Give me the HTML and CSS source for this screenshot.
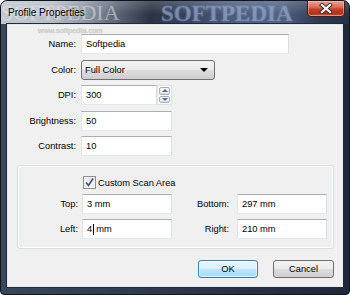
FILE: index.html
```html
<!DOCTYPE html>
<html lang="en">
<head>
    <meta charset="UTF-8">
    <title>Profile Properties</title>
    <link rel="stylesheet" href="styles.css">
</head>
<body>
    <div class="window">
        <div class="titlebar">
            <span class="watermark wm-left">SOFTPEDIA</span>
            <span class="watermark wm-right">SOFTPEDIA</span>
            <span class="title">Profile Properties</span>
            <div class="close-btn">
                <svg width="14" height="11" viewBox="0 0 14 11">
                    <path d="M3 2 L11 9 M11 2 L3 9" stroke="#3a2a28" stroke-width="4" stroke-linecap="square"/>
                    <path d="M3 2 L11 9 M11 2 L3 9" stroke="#ffffff" stroke-width="2.2" stroke-linecap="square"/>
                </svg>
            </div>
        </div>

        <div class="client">
            <span class="site-mark">www.softpedia.com</span>

            <div class="fields">
                <label class="lbl">Name:</label>
                <div class="input name-input">Softpedia</div>

                <label class="lbl">Color:</label>
                <div class="select">
                    <span>Full Color</span>
                    <span class="drop-arrow"></span>
                </div>

                <label class="lbl">DPI:</label>
                <div class="spin-wrap">
                    <div class="input dpi-input">300</div>
                    <div class="spinner">
                        <div class="spin-btn"><span class="tri-up"></span></div>
                        <div class="spin-btn"><span class="tri-down"></span></div>
                    </div>
                </div>

                <label class="lbl">Brightness:</label>
                <div class="input short-input">50</div>

                <label class="lbl">Contrast:</label>
                <div class="input short-input">10</div>
            </div>

            <div class="scan-group">
                <div class="check-row">
                    <span class="checkbox">
                        <svg width="11" height="11" viewBox="0 0 11 11">
                            <path d="M2 5.5 L4.5 8.5 L9 1.5" fill="none" stroke="#3d4f8a" stroke-width="1.6"/>
                        </svg>
                    </span>
                    <span>Custom Scan Area</span>
                </div>

                <label class="lbl">Top:</label>
                <div class="input short-input">3 mm</div>
                <label class="lbl lbl-right">Bottom:</label>
                <div class="input short-input">297 mm</div>

                <label class="lbl">Left:</label>
                <div class="input short-input">4<span class="caret"></span>mm</div>
                <label class="lbl lbl-right">Right:</label>
                <div class="input short-input">210 mm</div>
            </div>

            <div class="buttons">
                <button class="btn btn-default">OK</button>
                <button class="btn btn-cancel">Cancel</button>
            </div>
        </div>
    </div>
</body>
</html>
```

FILE: styles.css
```css
body {
    margin: 0;
    background-color: #ffffff;
    font-family: 'Liberation Sans', Arial, sans-serif;
    font-size: 9.3px;
    color: #000;
}
.window {
    width: 350px;
    height: 295px;
    box-sizing: border-box;
    border: 1px solid #10151e;
    border-radius: 7px 7px 4px 4px;
    background: linear-gradient(90deg, #3a465c 0%, #2c374c 50%, #1f2839 100%);
    display: flex;
    flex-direction: column;
    position: relative;
    overflow: hidden;
}
.titlebar {
    height: 23px;
    flex-shrink: 0;
    position: relative;
    overflow: hidden;
    background:
        linear-gradient(180deg, rgba(255, 255, 255, 0.18) 0%, rgba(255, 255, 255, 0) 60%),
        linear-gradient(90deg, #c3c7ce 0%, #b9bec7 14%, #9098a5 24%, #5d6576 33%, #2b3243 43%, #34405a 52%, #4b5b7a 66%, #506282 80%, #2d3850 92%, #273248 100%);
}
.title {
    position: absolute;
    left: 7px;
    top: 6px;
    font-size: 10px;
    color: #000;
    text-shadow: 0 0 4px rgba(255, 255, 255, 0.9);
}
.watermark {
    position: absolute;
    font-family: 'Liberation Serif', 'Times New Roman', serif;
    white-space: nowrap;
    line-height: 1;
}
.wm-left {
    left: 0;
    top: 1px;
    font-size: 22px;
    color: rgba(232, 234, 238, 0.5);
}
.wm-right {
    left: 160px;
    top: 1px;
    font-size: 23px;
    font-weight: bold;
    color: rgba(150, 170, 210, 0.4);
    text-shadow: 0 0 2px rgba(150, 170, 210, 0.6);
}
.close-btn {
    position: absolute;
    right: 4px;
    top: -1px;
    width: 38px;
    height: 17px;
    box-sizing: border-box;
    border: 1px solid #4a1c14;
    border-radius: 0 0 4px 4px;
    background: linear-gradient(180deg, #e9a493 0%, #d9705a 40%, #c5402a 55%, #b23018 85%, #d3684c 100%);
    box-shadow: inset 0 0 0 1px rgba(255, 210, 200, 0.45);
    display: flex;
    align-items: center;
    justify-content: center;
}
.client {
    flex: 1;
    margin: 0 6px 7px 6px;
    background-color: #f0f0f0;
    border: 1px solid #e4e8ee;
    box-shadow: 0 0 0 1px #222a3a;
    position: relative;
    display: flex;
    flex-direction: column;
}
.site-mark {
    position: absolute;
    left: 30px;
    top: 1px;
    font-size: 7.5px;
    color: #d4d4d4;
    text-shadow: 0 0 1px #b0b0b0;
}
.fields {
    display: grid;
    grid-template-columns: 68px auto;
    column-gap: 5px;
    row-gap: 5.5px;
    padding-top: 9px;
    justify-items: start;
    align-items: center;
}
.lbl {
    justify-self: end;
}
.input {
    height: 20px;
    box-sizing: border-box;
    border: 1px solid;
    border-color: #abadb3 #dbdfe6 #e3e9ef #e2e3ea;
    background-color: #fff;
    padding: 0 4px;
    line-height: 18px;
    white-space: nowrap;
}
.name-input {
    width: 208px;
}
.short-input {
    width: 91px;
}
.dpi-input {
    width: 76px;
}
.select {
    width: 134px;
    height: 20px;
    box-sizing: border-box;
    border: 1px solid #707070;
    border-radius: 3px;
    background: linear-gradient(180deg, #f2f2f2 0%, #ebebeb 50%, #dddddd 51%, #cfcfcf 100%);
    padding: 0 3px;
    display: flex;
    align-items: center;
    justify-content: space-between;
}
.drop-arrow {
    width: 0;
    height: 0;
    border-left: 4px solid transparent;
    border-right: 4px solid transparent;
    border-top: 4px solid #000;
    margin-right: 3px;
}
.spin-wrap {
    display: flex;
}
.spinner {
    width: 15px;
    height: 20px;
    box-sizing: border-box;
    border: 1px solid #dde0e5;
    padding: 1px;
    display: flex;
    flex-direction: column;
    gap: 1px;
    background-color: #fff;
}
.spin-btn {
    flex: 1;
    border: 1px solid #a9aeb6;
    border-radius: 2px;
    background: linear-gradient(180deg, #f7f7f7 0%, #e3e3e3 100%);
    display: flex;
    align-items: center;
    justify-content: center;
}
.tri-up,
.tri-down {
    width: 0;
    height: 0;
    border-left: 3px solid transparent;
    border-right: 3px solid transparent;
}
.tri-up {
    border-bottom: 3px solid #4a6fae;
}
.tri-down {
    border-top: 3px solid #4a6fae;
}
.scan-group {
    margin: 9px 8px 0 9px;
    border: 1px solid #d5dfe5;
    border-radius: 3px;
    box-shadow: inset 0 0 0 1px #ffffff;
    padding: 10px 0 9px 0;
    display: grid;
    grid-template-columns: 60px 90px 57px 90px;
    column-gap: 4px;
    row-gap: 5px;
    align-items: center;
    justify-items: start;
}
.check-row {
    grid-column: 2 / span 3;
    display: flex;
    align-items: center;
    gap: 2px;
    height: 13px;
    margin-left: 1px;
}
.checkbox {
    width: 13px;
    height: 13px;
    box-sizing: border-box;
    border: 1px solid #8e8f8f;
    background: linear-gradient(180deg, #e6e6e6 0%, #fafafa 100%);
    box-shadow: inset 0 0 0 1px #f4f4f4;
    display: flex;
    align-items: center;
    justify-content: center;
}
.scan-group .short-input {
    width: 90px;
}
.lbl-right {
    padding-right: 4px;
}
.caret {
    display: inline-block;
    width: 1px;
    height: 11px;
    background-color: #000;
    vertical-align: middle;
    margin: 0 2px 0 1px;
}
.buttons {
    display: flex;
    justify-content: flex-end;
    gap: 15px;
    margin: 11px 8px 0 0;
}
.btn {
    height: 18px;
    box-sizing: border-box;
    border: 1px solid #707070;
    border-radius: 3px;
    background: linear-gradient(180deg, #f2f2f2 0%, #ebebeb 50%, #dddddd 51%, #cfcfcf 100%);
    font-family: 'Liberation Sans', Arial, sans-serif;
    font-size: 9.3px;
    color: #000;
    padding: 0;
}
.btn-default {
    width: 60px;
    border-color: #3c7fb1;
    background: linear-gradient(180deg, #eaf6fd 0%, #d9f0fc 50%, #bee6fd 51%, #a7d9f5 100%);
    box-shadow: inset 0 0 0 1px rgba(255, 255, 255, 0.6);
}
.btn-cancel {
    width: 61px;
}
```
